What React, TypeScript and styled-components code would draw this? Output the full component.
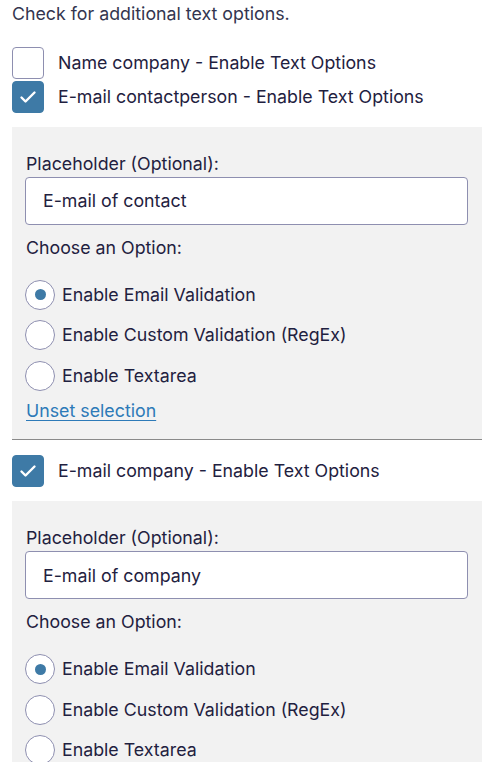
import React, { useState } from 'react';
import styled, { createGlobalStyle } from 'styled-components';

const GlobalStyle = createGlobalStyle`
  html, body {
    margin: 0;
    padding: 0;
    background: #ffffff;
  }
  body {
    font-family: Inter, 'Noto Sans', Arial, sans-serif;
    color: #1f2140;
  }
`;

const Page = styled.div`
  padding: 0 14px 0 12px;
  font-size: 17.8px;
  line-height: 26px;
`;

const Intro = styled.p`
  margin: 1px 0 0;
  color: #33354f;
`;

const CheckList = styled.div`
  display: flex;
  flex-direction: column;
  margin-top: 18.7px;
`;

const CheckRow = styled.label`
  display: flex;
  align-items: center;
  gap: 14px;
  height: 34px;
  cursor: pointer;
`;

const Box = styled.span<{ checked?: boolean }>`
  box-sizing: border-box;
  width: 32px;
  height: 32px;
  flex: none;
  border-radius: 4px;
  border: 1px solid ${p => (p.checked ? '#3e7aa6' : '#8e8fb0')};
  background: ${p => (p.checked ? '#3e7aa6' : '#ffffff')};
  display: flex;
  align-items: center;
  justify-content: center;
`;

const Group = styled.div<{ divided?: boolean; spaced?: boolean }>`
  display: flex;
  flex-direction: column;
  ${p => p.divided && 'border-bottom: 1px solid #8a8a8a;'}
  ${p => p.spaced && 'margin-top: 14px;'}
`;

const Panel = styled.div`
  background: #f2f2f2;
  margin-top: 13px;
  padding: 24px 14px 15px 13px;
  display: flex;
  flex-direction: column;
`;

const FieldLabel = styled.div`
  padding-left: 1px;
`;

const TextInput = styled.input`
  box-sizing: border-box;
  height: 48px;
  width: 100%;
  margin: 0;
  border: 1px solid #8e8fb0;
  border-radius: 4px;
  background: #ffffff;
  padding: 0 17px;
  font-family: inherit;
  font-size: 17.8px;
  color: #1f2140;
  outline: none;
`;

const OptionHeading = styled.div`
  padding-left: 1px;
  margin-top: 10px;
`;

const RadioList = styled.div`
  display: flex;
  flex-direction: column;
  margin-top: 14px;
`;

const RadioRow = styled.label`
  display: flex;
  align-items: center;
  gap: 7px;
  height: 40.5px;
  cursor: pointer;
`;

const Circle = styled.span<{ checked?: boolean }>`
  box-sizing: border-box;
  width: 30px;
  height: 30px;
  flex: none;
  border-radius: 50%;
  border: 1px solid #8e8fb0;
  background: #ffffff;
  display: flex;
  align-items: center;
  justify-content: center;

  &::after {
    content: '';
    width: 11px;
    height: 11px;
    border-radius: 50%;
    background: ${p => (p.checked ? '#3e7aa6' : 'transparent')};
  }
`;

const UnsetLink = styled.a`
  align-self: flex-start;
  margin-top: 2px;
  padding-left: 1px;
  color: #2d7ab8;
  text-decoration: underline;
  text-underline-offset: 3px;
  cursor: pointer;
`;

const Check = () => (
  <svg width="20" height="20" viewBox="0 0 20 20" fill="none">
    <path d="M3.5 10.5l4 4 9-9" stroke="#ffffff" strokeWidth="2.4" strokeLinecap="round" strokeLinejoin="round" />
  </svg>
);

const options = ['Enable Email Validation', 'Enable Custom Validation (RegEx)', 'Enable Textarea'];

const OptionsPanel: React.FC<{ placeholder: string; showUnset?: boolean }> = ({ placeholder, showUnset }) => {
  const [choice, setChoice] = useState(0);
  return (
    <Panel>
      <FieldLabel>Placeholder (Optional):</FieldLabel>
      <TextInput defaultValue={placeholder} />
      <OptionHeading>Choose an Option:</OptionHeading>
      <RadioList>
        {options.map((opt, i) => (
          <RadioRow key={opt} onClick={() => setChoice(i)}>
            <Circle checked={choice === i} />
            {opt}
          </RadioRow>
        ))}
      </RadioList>
      {showUnset && <UnsetLink onClick={() => setChoice(-1)}>Unset selection</UnsetLink>}
    </Panel>
  );
};

export default function App() {
  return (
    <Page>
      <GlobalStyle />
      <Intro>Check for additional text options.</Intro>
      <CheckList>
        <CheckRow>
          <Box />
          Name company - Enable Text Options
        </CheckRow>
        <Group divided>
          <CheckRow>
            <Box checked>
              <Check />
            </Box>
            E-mail contactperson - Enable Text Options
          </CheckRow>
          <OptionsPanel placeholder="E-mail of contact" showUnset />
        </Group>
        <Group spaced>
          <CheckRow>
            <Box checked>
              <Check />
            </Box>
            E-mail company - Enable Text Options
          </CheckRow>
          <OptionsPanel placeholder="E-mail of company" />
        </Group>
      </CheckList>
    </Page>
  );
}
